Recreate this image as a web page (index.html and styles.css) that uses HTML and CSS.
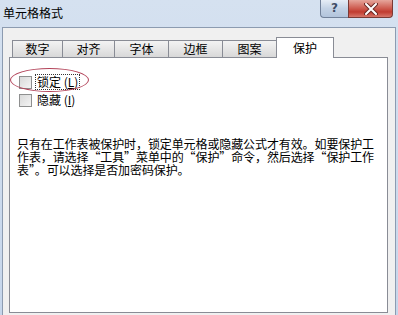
FILE: index.html
```html
<!DOCTYPE html>
<html lang="zh">
  <head>
    <meta charset="utf-8" />
    <title>单元格格式</title>
    <link rel="stylesheet" href="styles.css">
  </head>
  <body>
    <div class="window">
      <!-- title bar -->
      <div class="titlebar">
        <span class="title">单元格格式</span>
        <div class="caption-buttons">
          <div class="btn-help">?</div>
          <div class="btn-close">
            <svg width="14" height="12" viewBox="0 0 14 12">
              <path d="M2 1 L12 11 M12 1 L2 11" stroke="#6b2a26" stroke-width="4" stroke-linecap="round" />
              <path d="M2 1 L12 11 M12 1 L2 11" stroke="#ffffff" stroke-width="2" stroke-linecap="round" />
            </svg>
          </div>
        </div>
      </div>

      <div class="client">
        <div class="tabs">
          <div class="tab" style="width: 50px">数字</div>
          <div class="tab" style="width: 52px">对齐</div>
          <div class="tab" style="width: 54px">字体</div>
          <div class="tab" style="width: 54px">边框</div>
          <div class="tab" style="width: 54px">图案</div>
          <div class="tab active">保护</div>
        </div>

        <div class="panel">
          <div class="options">
            <div class="option">
              <span class="checkbox"></span>
              <span class="label focused">锁定 (<u>L</u>)</span>
            </div>
            <div class="option">
              <span class="checkbox"></span>
              <span class="label">隐藏 (<u>I</u>)</span>
            </div>
            <!-- red circle drawn over the first option -->
            <div class="highlight"></div>
          </div>

          <p class="note">
            只有在工作表被保护时，锁定单元格或隐藏公式才有效。如要保护工<br />
            作表，请选择“工具”菜单中的“保护”命令，然后选择“保护工作<br />
            表”。可以选择是否加密码保护。
          </p>
        </div>
      </div>
    </div>
  </body>
</html>
```

FILE: styles.css
```css
body {
  margin: 0;
  background-color: #c9d8ec;
  font-family: "Noto Sans CJK SC", "Noto Sans", sans-serif;
  font-size: 12px;
  color: #000;
  overflow: hidden;
}
.window {
  width: 398px;
  height: 315px;
  background: linear-gradient(to bottom, #d5e1f0, #c6d6eb);
}
/* Title bar */
.titlebar {
  height: 27px;
  display: flex;
  justify-content: space-between;
  align-items: flex-start;
}
.title {
  padding: 5px 0 0 3px;
  line-height: 16px;
  font-size: 12px;
}
.caption-buttons {
  display: flex;
  margin-right: 5px;
}
.btn-help {
  width: 27px;
  height: 17px;
  border: 1px solid #71819a;
  border-top: none;
  border-right: none;
  border-radius: 0 0 0 4px;
  background: linear-gradient(to bottom, #e6edf6, #c3d2e5 50%, #b2c4dc);
  color: #3f4e66;
  text-align: center;
  font-family: "DejaVu Sans", sans-serif;
  font-weight: bold;
  font-size: 12px;
  line-height: 17px;
}
.btn-close {
  width: 43px;
  height: 17px;
  border: 1px solid #7a3a35;
  border-top: none;
  border-radius: 0 0 4px 0;
  background: linear-gradient(to bottom, #e6a69c, #cd5a4e 50%, #c13b2f 70%, #d7776b);
  display: flex;
  align-items: center;
  justify-content: center;
}
/* Dialog body */
.client {
  margin: 0 2px;
  height: 288px;
  border-top: 1px solid #8c9bb0;
  border-left: 1px solid #8c9bb0;
  border-right: 1px solid #8c9bb0;
  background-color: #f0f0f0;
  padding: 9px 7px 0 6px;
  box-sizing: border-box;
}
.tabs {
  display: flex;
  align-items: flex-end;
  padding-left: 3px;
  height: 20px;
  position: relative;
  z-index: 1;
}
.tab {
  height: 17px;
  box-sizing: border-box;
  border: 1px solid #898c95;
  border-right: none;
  border-bottom: none;
  background: linear-gradient(to bottom, #f3f3f3, #e6e6e6 50%, #d8d8d8);
  text-align: center;
  font-size: 12px;
  line-height: 16px;
}
.tab.active {
  width: 58px;
  height: 21px;
  margin-bottom: -1px;
  border-right: 1px solid #898c95;
  background: #fff;
  line-height: 19px;
}
.panel {
  height: 256px;
  box-sizing: border-box;
  border: 1px solid #898c95;
  background-color: #fff;
  padding: 15px 0 0 9px;
}
.options {
  position: relative;
}
.option {
  display: flex;
  align-items: center;
  height: 18px;
}
.checkbox {
  width: 11px;
  height: 11px;
  border: 1px solid #8e8f8f;
  background: linear-gradient(135deg, #d9d9d9, #f4f4f4);
  margin-right: 3px;
}
.label {
  padding: 0 1px;
  line-height: 14px;
  font-size: 12px;
  border: 1px dotted transparent;
}
.label.focused {
  border-color: #333;
}
.highlight {
  position: absolute;
  left: -9px;
  top: -5px;
  width: 77px;
  height: 22px;
  border: 1px solid #b3445a;
  border-radius: 50%;
}
.note {
  margin: 28px 0 0 -2px;
  font-size: 12px;
  line-height: 13px;
  letter-spacing: -0.1px;
  white-space: nowrap;
}
```
